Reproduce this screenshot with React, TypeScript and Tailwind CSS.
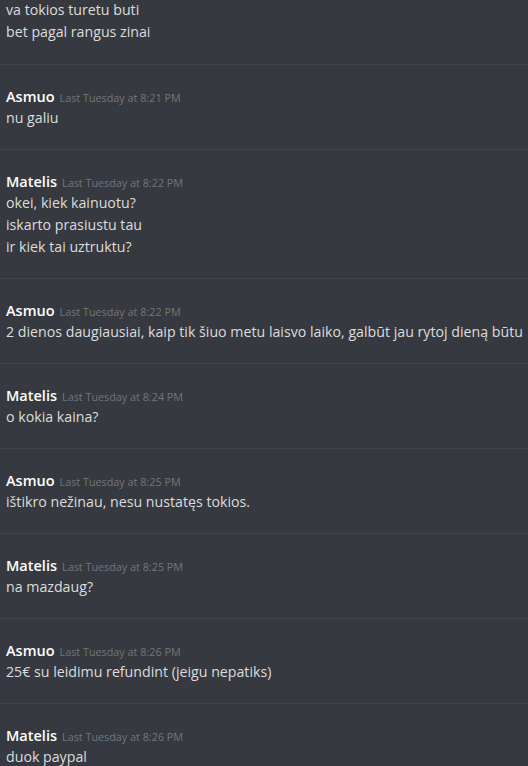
import React from "react";

type Msg = { name: string; time: string; lines: string[] };

const msgs: Msg[] = [
  { name: "Asmuo", time: "Last Tuesday at 8:21 PM", lines: ["nu galiu"] },
  { name: "Matelis", time: "Last Tuesday at 8:22 PM", lines: ["okei, kiek kainuotu?", "iskarto prasiustu tau", "ir kiek tai uztruktu?"] },
  { name: "Asmuo", time: "Last Tuesday at 8:22 PM", lines: ["2 dienos daugiausiai, kaip tik šiuo metu laisvo laiko, galbūt jau rytoj dieną būtu"] },
  { name: "Matelis", time: "Last Tuesday at 8:24 PM", lines: ["o kokia kaina?"] },
  { name: "Asmuo", time: "Last Tuesday at 8:25 PM", lines: ["ištikro nežinau, nesu nustatęs tokios."] },
  { name: "Matelis", time: "Last Tuesday at 8:25 PM", lines: ["na mazdaug?"] },
  { name: "Asmuo", time: "Last Tuesday at 8:26 PM", lines: ["25€ su leidimu refundint (jeigu nepatiks)"] },
  { name: "Matelis", time: "Last Tuesday at 8:26 PM", lines: ["duok paypal"] },
];

export default function App() {
  return (
    <div
      className="w-[528px] h-[766px] overflow-hidden bg-[#36393f] text-[#dcddde] text-[14.2px] leading-[22px] pl-[6px]"
      style={{ fontFamily: '"Open Sans", "Noto Sans", sans-serif' }}
    >
      <div className="-mt-[1px] pb-[21px]">
        <div className="whitespace-nowrap">va tokios turetu buti</div>
        <div className="whitespace-nowrap">bet pagal rangus zinai</div>
      </div>
      {msgs.map((m, i) => (
        <div key={i} className="border-t border-[#42454a] -ml-[6px] pl-[6px] pt-[21px] pb-[20px]">
          <div className="flex items-baseline h-[21px] whitespace-nowrap">
            <span className="text-white font-semibold text-[14.5px] leading-[22px]">{m.name}</span>
            <span className="ml-[5px] text-[#72767d] text-[10.8px] leading-[22px]">{m.time}</span>
          </div>
          {m.lines.map((l, j) => (
            <div key={j} className="whitespace-nowrap">{l}</div>
          ))}
        </div>
      ))}
    </div>
  );
}
